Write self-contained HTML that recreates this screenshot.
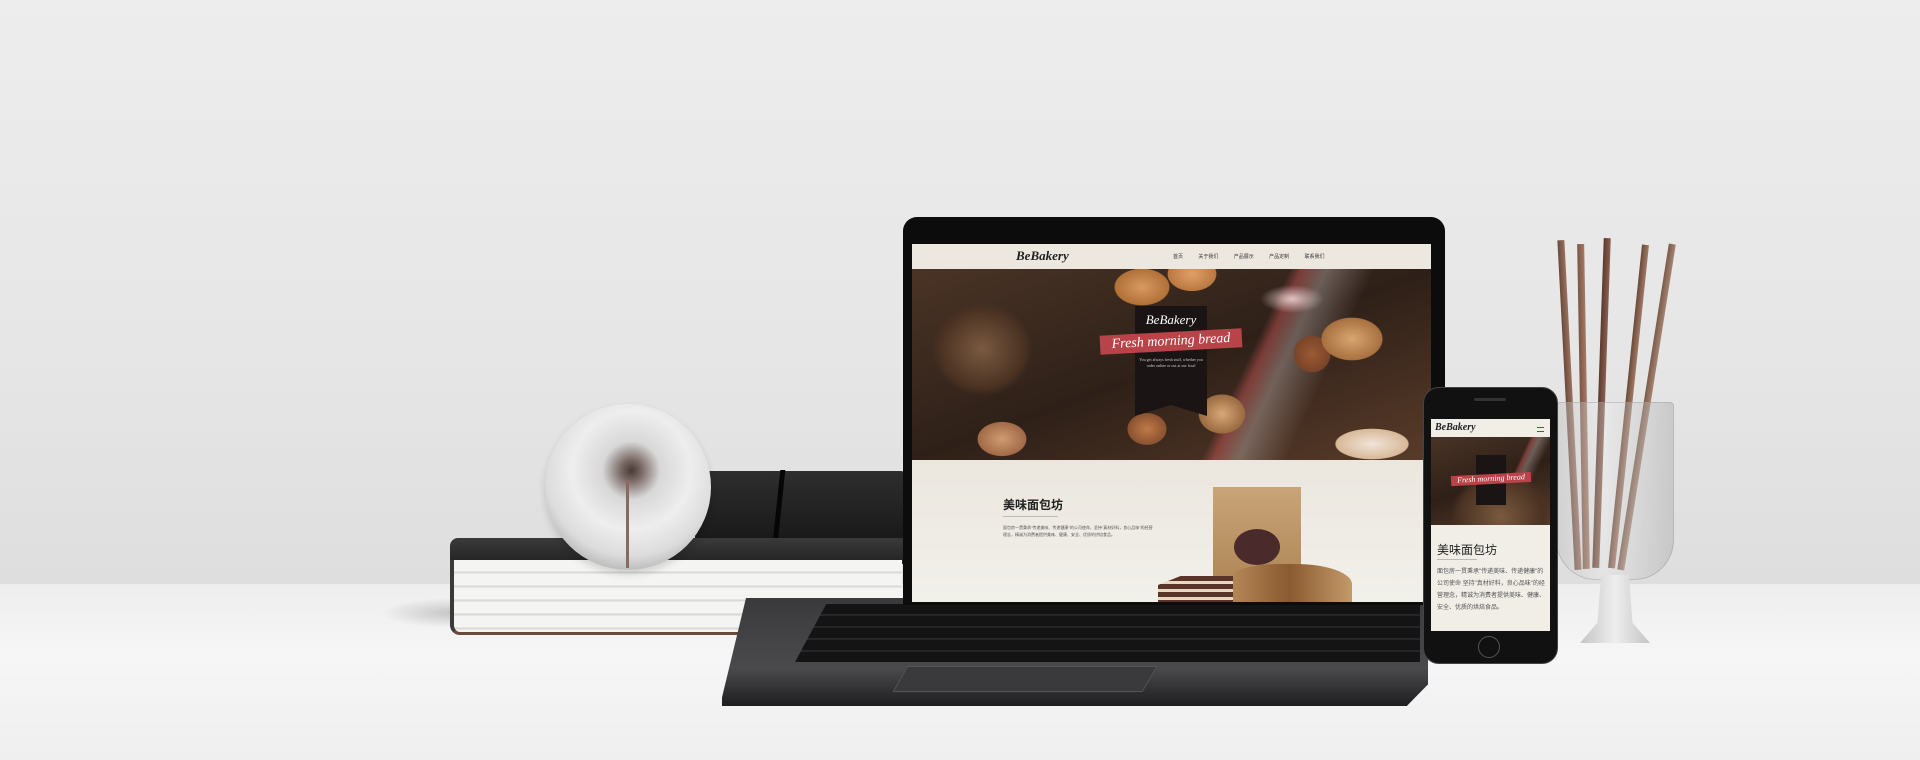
<!DOCTYPE html>
<html><head><meta charset="utf-8"><style>
*{margin:0;padding:0;box-sizing:border-box}
body{width:1920px;height:760px;overflow:hidden;position:relative;background:#e4e4e4;font-family:"Liberation Sans","Noto Sans CJK SC",sans-serif}
.wall{position:absolute;left:0;top:0;width:1920px;height:586px;background:linear-gradient(180deg,#ededed 0%,#e6e6e6 60%,#dedede 100%)}
.table{position:absolute;left:0;top:584px;width:1920px;height:176px;background:linear-gradient(180deg,#eeeeee,#f6f6f6 40%,#efefef);}
.abs{position:absolute}
.hero{background:
radial-gradient(ellipse 70px 65px at 70px 80px,#7a5a40 0,#4a3222 60%,transparent 72%),
radial-gradient(ellipse 45px 30px at 230px 18px,#d89a60 0,#b07038 60%,transparent 62%),
radial-gradient(ellipse 40px 28px at 280px 5px,#e0a068 0,#b87840 60%,transparent 62%),
radial-gradient(ellipse 50px 35px at 440px 70px,#d8a670 0,#a87040 60%,transparent 62%),
radial-gradient(ellipse 30px 30px at 400px 85px,#9a5a34 0,#7a4428 60%,transparent 62%),
radial-gradient(ellipse 38px 32px at 310px 145px,#d8a878 0,#9a6a40 60%,transparent 62%),
radial-gradient(ellipse 32px 26px at 235px 160px,#c07a48 0,#8a5230 60%,transparent 62%),
radial-gradient(ellipse 40px 28px at 90px 170px,#d09a70 0,#a06a48 60%,transparent 62%),
radial-gradient(ellipse 60px 25px at 460px 175px,#f0e4d8 0,#d8b898 60%,transparent 62%),
radial-gradient(ellipse 45px 20px at 380px 30px,#e0c4c4 0,transparent 70%),
linear-gradient(115deg,transparent 62%,rgba(210,90,90,.45) 64%,rgba(240,230,230,.3) 68%,transparent 76%),
linear-gradient(160deg,#4a3426,#2e2018 50%,#5a3c2a)}
</style></head><body>
<div class="wall"></div>
<div class="table"></div>
<div class="abs" style="left:380px;top:598px;width:120px;height:30px;background:radial-gradient(ellipse at 60% 50%,rgba(0,0,0,.18),transparent 70%)"></div>

<!-- books -->
<div class="abs" style="left:695px;top:471px;width:210px;height:85px;background:linear-gradient(180deg,#2e2e2e,#141414);border-radius:12px 4px 4px 10px"></div>
<div class="abs" style="left:776px;top:470px;width:5px;height:82px;background:#060606;transform:skewX(-6deg)"></div>
<div class="abs" style="left:450px;top:538px;width:455px;height:26px;background:linear-gradient(180deg,#3a3a3a,#222);border-radius:8px 4px 0 0"></div>
<div class="abs" style="left:450px;top:560px;width:452px;height:75px;background:repeating-linear-gradient(180deg,#f4f4f2 0,#f4f4f2 11px,#d4d4d2 12px,#ebebe9 14px);border-radius:0 0 4px 10px;border-bottom:3px solid #6a4a3a;border-left:4px solid #3a3a3a"></div>
<!-- sphere -->
<div class="abs" style="left:545px;top:404px;width:166px;height:166px;border-radius:50%;background:radial-gradient(circle at 52% 40%,#4a3a34 0,#7a6a65 8%,#d8d8d8 22%,#eeeeee 45%,#dcdcdc 65%,#9a9a9a 88%,#555 100%);box-shadow:0 4px 8px rgba(0,0,0,.15)"></div>
<div class="abs" style="left:626px;top:480px;width:3px;height:88px;background:#8a6a5a"></div>

<!-- laptop base -->
<div class="abs" style="left:722px;top:598px;width:706px;height:108px;background:linear-gradient(180deg,#3a3a3c,#4a4a4c 65%,#1e1e20);clip-path:polygon(24px 0,100% 0,100% 80%,97% 100%,0 100%,0 92%);"></div>
<div class="abs" style="left:795px;top:604px;width:625px;height:58px;background:repeating-linear-gradient(180deg,#141414 0,#141414 10px,#262628 10px,#262628 12px);clip-path:polygon(5% 0,100% 0,100% 100%,0 100%)"></div>
<div class="abs" style="left:900px;top:666px;width:250px;height:26px;background:#3a3a3c;border:1px solid #555;transform:skewX(-30deg)"></div>
<!-- laptop screen -->
<div class="abs" style="left:903px;top:217px;width:542px;height:388px;background:#0c0c0c;border-radius:14px 14px 0 0"></div>
<div class="abs" style="left:912px;top:244px;width:519px;height:358px;background:#ece8e0;overflow:hidden">
 <div class="abs" style="left:0;top:0;width:519px;height:25px;background:#ece8df">
  <div class="abs" style="left:104px;top:4px;font:italic bold 13px 'Liberation Serif',serif;color:#222">BeBakery</div>
  <div class="abs" style="left:261px;top:9px;font-size:5px;color:#333;word-spacing:14px">首页 关于我们 产品展示 产品定制 联系我们</div>
 </div>
 <div class="abs hero" style="left:0;top:25px;width:519px;height:194px"></div>
 <div class="abs" style="left:223px;top:62px;width:72px;height:110px;background:#1a1414;clip-path:polygon(0 0,100% 0,100% 100%,50% 90%,0 100%)"></div>
 <div class="abs" style="left:227px;top:68px;width:64px;text-align:center;font:italic 13px 'Liberation Serif',serif;color:#fff">BeBakery</div>
 <div class="abs" style="left:188px;top:88px;width:142px;height:19px;background:#b8444a;transform:rotate(-3deg);color:#fff;font:italic 14px 'Liberation Serif',serif;text-align:center;line-height:19px">Fresh morning bread</div>
 <div class="abs" style="left:227px;top:113px;width:64px;text-align:center;font:4px 'Liberation Serif',serif;color:#ccc;line-height:6px">You get always fresh stuff, whether you order online or out at our local</div>
 <div class="abs" style="left:0;top:216px;width:519px;height:142px;background:linear-gradient(180deg,#ebe7df,#f2f0ea)"></div>
 <div class="abs" style="left:91px;top:252px;font-size:12px;font-weight:bold;color:#222">美味面包坊</div>
 <div class="abs" style="left:91px;top:272px;width:55px;height:1px;background:#bbb"></div>
 <div class="abs" style="left:91px;top:280px;width:150px;font-size:4px;line-height:7px;color:#555">面包房一贯秉承"传递美味、传递健康"的公司使命，坚持"真材好料，良心品味"的经营理念，精诚为消费者提供美味、健康、安全、优质的烘焙食品。</div>
 <div class="abs" style="left:301px;top:243px;width:88px;height:120px;background:linear-gradient(180deg,#c9a478,#a9804f)"></div>
 <div class="abs" style="left:322px;top:285px;width:46px;height:36px;border-radius:50%;background:#4a2a2a"></div>
 <div class="abs" style="left:315px;top:320px;width:125px;height:45px;border-radius:40% 45% 0 0;background:linear-gradient(90deg,#b88a5a,#8a5a30,#c49a6a)"></div>
 <div class="abs" style="left:246px;top:332px;width:75px;height:30px;background:repeating-linear-gradient(180deg,#5a3428 0,#5a3428 5px,#e8d8c0 5px,#e8d8c0 8px);clip-path:polygon(30% 0,100% 0,100% 100%,0 100%,0 30%)"></div>
</div>

<!-- glass with pencils -->
<div class="abs" style="left:1566px;top:240px;width:7px;height:330px;background:linear-gradient(90deg,#6a4a3a,#9a7060);transform:rotate(-3deg)"></div>
<div class="abs" style="left:1580px;top:244px;width:7px;height:325px;background:linear-gradient(90deg,#7a5444,#a37a66);transform:rotate(-1deg)"></div>
<div class="abs" style="left:1598px;top:238px;width:7px;height:330px;background:linear-gradient(90deg,#5a3a2e,#8a6050);transform:rotate(2deg)"></div>
<div class="abs" style="left:1625px;top:244px;width:7px;height:325px;background:linear-gradient(90deg,#6a4a3a,#a07a66);transform:rotate(6deg)"></div>
<div class="abs" style="left:1643px;top:242px;width:7px;height:330px;background:linear-gradient(90deg,#7a5a4a,#a58472);transform:rotate(9deg)"></div>
<div class="abs" style="left:1556px;top:402px;width:118px;height:178px;background:linear-gradient(90deg,rgba(190,190,190,.45),rgba(250,250,250,.25) 40%,rgba(170,170,170,.45));border-radius:4px 4px 40px 40px;border:1px solid rgba(150,150,150,.4)"></div>
<div class="abs" style="left:1580px;top:575px;width:70px;height:68px;background:linear-gradient(90deg,#c4c4c4,#eee,#c4c4c4);clip-path:polygon(30% 0,70% 0,75% 70%,100% 100%,0 100%,25% 70%)"></div>

<!-- phone -->
<div class="abs" style="left:1423px;top:387px;width:135px;height:277px;background:#111;border-radius:16px;border:1px solid #444"></div>
<div class="abs" style="left:1474px;top:398px;width:32px;height:3px;background:#333;border-radius:2px"></div>
<div class="abs" style="left:1478px;top:636px;width:22px;height:22px;border-radius:50%;border:1px solid #555"></div>
<div class="abs" style="left:1431px;top:419px;width:119px;height:212px;background:#f1eee8;overflow:hidden">
 <div class="abs" style="left:4px;top:3px;font:italic bold 10px 'Liberation Serif',serif;color:#222">BeBakery</div>
 <div class="abs" style="left:106px;top:8px;width:7px;height:5px;border-top:1px solid #a33;border-bottom:1px solid #a33"></div>
 <div class="abs hero" style="left:0;top:18px;width:119px;height:88px;background-size:119px 88px"></div>
 <div class="abs" style="left:45px;top:36px;width:30px;height:50px;background:#1a1414"></div>
 <div class="abs" style="left:20px;top:55px;width:80px;height:10px;background:#b8444a;color:#fff;font:italic 8px 'Liberation Serif',serif;text-align:center;line-height:10px;transform:rotate(-3deg)">Fresh morning bread</div>
 <div class="abs" style="left:6px;top:122px;font-size:12px;color:#222">美味面包坊</div>
 <div class="abs" style="left:6px;top:140px;width:40px;height:1px;background:#bbb"></div>
 <div class="abs" style="left:6px;top:147px;width:108px;font-size:6px;line-height:12px;color:#555">面包房一贯秉承"传递美味、传递健康"的公司使命 坚持"真材好料，良心品味"的经营理念，精诚为消费者提供美味、健康、安全、优质的烘焙食品。</div>
</div>
</body></html>
